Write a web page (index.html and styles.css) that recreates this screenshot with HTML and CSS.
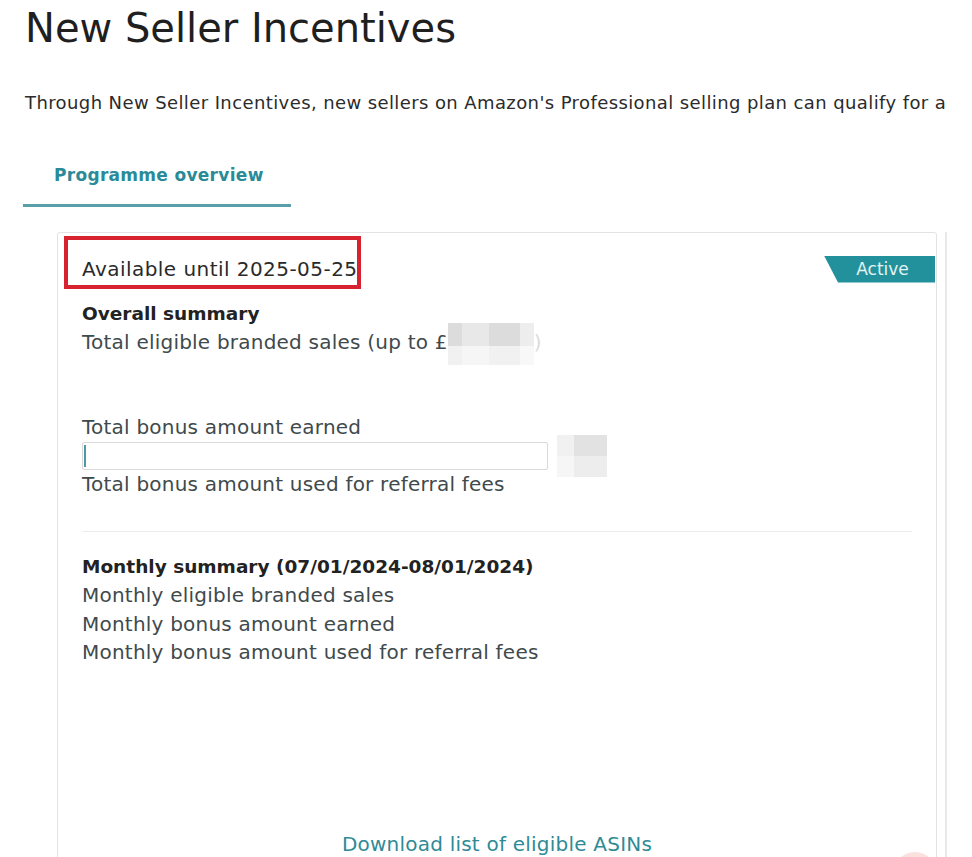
FILE: index.html
```html
<!DOCTYPE html>
<html lang="en">
<head>
    <meta charset="UTF-8">
    <title>New Seller Incentives</title>
    <link rel="stylesheet" href="styles.css">
</head>
<body>
    <h1 class="page-title">New Seller Incentives</h1>
    <p class="intro">Through New Seller Incentives, new sellers on Amazon's Professional selling plan can qualify for a</p>

    <div class="tabs">
        <div class="tab tab-active">Programme overview</div>
    </div>

    <div class="panel-wrap">
        <div class="card">
            <div class="highlight"></div>

            <div class="card-head">
                <span class="available">Available until 2025-05-25</span>
                <span class="badge">Active</span>
            </div>

            <div class="section">
                <div class="section-title">Overall summary</div>
                <div class="row">Total eligible branded sales (up to £<span class="masked masked-wide"></span><span class="faint">)</span></div>
            </div>

            <div class="section section-bonus">
                <div class="row">Total bonus amount earned</div>
                <div class="field-row">
                    <div class="field"><span class="caret"></span></div>
                    <span class="masked masked-small"></span>
                </div>
                <div class="row">Total bonus amount used for referral fees</div>
            </div>

            <hr class="divider">

            <div class="section section-monthly">
                <div class="section-title">Monthly summary (07/01/2024-08/01/2024)</div>
                <div class="row">Monthly eligible branded sales</div>
                <div class="row">Monthly bonus amount earned</div>
                <div class="row">Monthly bonus amount used for referral fees</div>
            </div>

            <div class="card-foot">
                <a href="#" class="link">Download list of eligible ASINs</a>
            </div>
        </div>
        <div class="side-rule"></div>
    </div>

    <div class="help-bubble"></div>
</body>
</html>
```

FILE: styles.css
```css
html {
    overflow: hidden;
}

body {
    font-family: "DejaVu Sans", Verdana, sans-serif;
    margin: 0;
    padding: 0 0 0 25px;
    color: #333;
    background-color: #fff;
    height: 857px;
    overflow: hidden;
    position: relative;
}

.page-title {
    font-size: 40px;
    font-weight: normal;
    line-height: 48px;
    margin: 4px 0 0;
    color: #1f1f1f;
}

.intro {
    font-size: 18px;
    line-height: 24px;
    letter-spacing: 0.4px;
    margin: 39px 0 0;
    white-space: nowrap;
    color: #2b2b2b;
}

.tabs {
    display: flex;
    margin: 48px 0 0 -2px;
}

.tab {
    font-size: 17px;
    line-height: 24px;
    font-weight: bold;
    letter-spacing: 0.3px;
    padding: 0 27px 17px 31px;
}

.tab-active {
    color: #2a8a97;
    border-bottom: 3px solid #5a9ea8;
}

.panel-wrap {
    display: flex;
    gap: 8px;
    margin: 25px 0 0 32px;
}

.card {
    position: relative;
    width: 880px;
    box-sizing: border-box;
    min-height: 680px;
    border: 1px solid #e3e3e3;
    border-radius: 3px 3px 0 0;
    padding: 22px 24px 0 24px;
    font-size: 20px;
    line-height: 28px;
    letter-spacing: 0.22px;
    color: #3f4a4c;
}

.side-rule {
    width: 2px;
    background-color: #e9e9e9;
}

.highlight {
    position: absolute;
    left: 6px;
    top: 3px;
    width: 297px;
    height: 53px;
    box-sizing: border-box;
    border: 4px solid #d6232f;
}

.card-head {
    display: flex;
    justify-content: space-between;
    align-items: center;
    margin-right: -23px;
}

.available {
    color: #2a2a2a;
    letter-spacing: 0.45px;
}

.badge {
    width: 111px;
    height: 27px;
    display: flex;
    align-items: center;
    justify-content: center;
    padding-left: 6px;
    box-sizing: border-box;
    background-color: #22919b;
    color: #e4f3f3;
    font-size: 17px;
    letter-spacing: 0;
    clip-path: polygon(0 0, 100% 0, 100% 100%, 14px 100%);
}

.section {
    margin-top: 17px;
}

.section-title {
    font-size: 18.5px;
    font-weight: bold;
    letter-spacing: 0;
    color: #222;
}

.section-bonus {
    margin-top: 57px;
}

.row {
    white-space: nowrap;
}

.masked {
    display: inline-block;
    vertical-align: middle;
}

.masked-wide {
    width: 86px;
    height: 42px;
    margin: -11px 0 -11px 0;
    background:
        linear-gradient(90deg, rgba(255,255,255,0) 0 16%, rgba(255,255,255,0.35) 16% 48%, rgba(255,255,255,0) 48% 84%, rgba(255,255,255,0.5) 84%),
        linear-gradient(#dcdcdc 0 55%, #f1f1f1 55%);
}

.faint {
    color: #d9dcdc;
}

.field-row {
    display: flex;
    align-items: center;
    gap: 9px;
    height: 29px;
}

.field {
    width: 466px;
    height: 28px;
    box-sizing: border-box;
    border: 1px solid #d9d9d9;
    border-radius: 2px;
    padding: 2px 1px;
}

.caret {
    display: block;
    width: 2px;
    height: 22px;
    background-color: #4d9aa5;
}

.masked-small {
    width: 50px;
    height: 42px;
    margin: -7px 0;
    background:
        linear-gradient(90deg, rgba(255,255,255,0.5) 0 35%, rgba(255,255,255,0) 35%),
        linear-gradient(#e2e2e2 0 50%, #ededed 50%);
}

.divider {
    border: none;
    border-top: 1px solid #ececec;
    margin: 33px 0 0;
}

.section-monthly {
    margin-top: 21px;
}

.section-monthly .row {
    line-height: 28.5px;
}

.card-foot {
    margin-top: 163px;
    text-align: center;
}

.link {
    color: #2f8a96;
    text-decoration: none;
}

.help-bubble {
    position: absolute;
    left: 893px;
    top: 852px;
    width: 44px;
    height: 44px;
    border-radius: 50%;
    background-color: #fbe1dd;
}
```
